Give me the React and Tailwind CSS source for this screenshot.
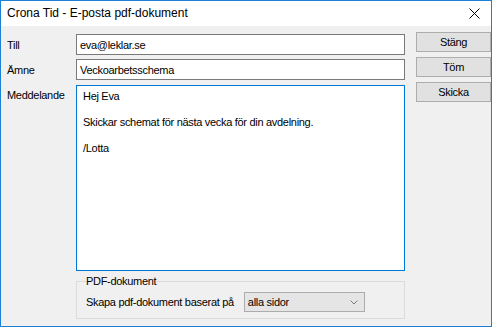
import React from 'react';

const font = { fontFamily: '"Liberation Sans", Arial, sans-serif' };

function Field({ label, value }) {
  return (
    <div className="flex items-center h-[21px]">
      <span className="w-[69px] text-[11px] leading-[14px]">{label}</span>
      <div className="w-[329px] h-[21px] border border-[#7a7a7a] bg-white flex items-center pl-[3px] text-[11px] leading-[14px]">
        {value}
      </div>
    </div>
  );
}

export default function App() {
  return (
    <div
      className="w-[492px] h-[327px] border border-[#1b80d6] bg-[#f0f0f0] flex flex-col text-black overflow-hidden"
      style={font}
    >
      {/* Title bar */}
      <div className="h-[25px] bg-white flex items-center justify-between pl-[6px] pr-[8px] shrink-0">
        <span className="text-[12px] leading-[15px]">Crona Tid - E-posta pdf-dokument</span>
        <svg width="11" height="11" viewBox="0 0 11 11" className="mr-[3px]">
          <path d="M0.5 0.5 L10.5 10.5 M10.5 0.5 L0.5 10.5" stroke="#000" strokeWidth="1" fill="none" />
        </svg>
      </div>

      {/* Body */}
      <div className="flex flex-1 pl-[6px] tracking-[-0.3px]">
        <div className="flex flex-col pt-[8px] w-[404px]">
          <Field label="Till" value="eva@leklar.se" />
          <div className="mt-[4px]">
            <Field label="Ämne" value="Veckoarbetsschema" />
          </div>
          <div className="flex mt-[5px]">
            <span className="w-[69px] text-[11px] leading-[13px] pt-[4px]">Meddelande</span>
            <div className="w-[329px] h-[186px] border border-[#0078d7] bg-white pl-[6px] pt-[4px] text-[11px] leading-[13px]">
              <p>Hej Eva</p>
              <p className="mt-[13px]">Skickar schemat för nästa vecka för din avdelning.</p>
              <p className="mt-[13px]">/Lotta</p>
            </div>
          </div>
          <fieldset className="ml-[69px] w-[329px] mt-[3px] border border-[#dcdcdc] px-[9px] pb-[6px]">
            <legend className="text-[11px] leading-[15px]">PDF-dokument</legend>
            <div className="flex items-center gap-[10px] mt-[3px]">
              <span className="text-[11px] leading-[14px] whitespace-nowrap">Skapa pdf-dokument baserat på</span>
              <div className="w-[121px] h-[20px] border border-[#acacac] bg-[#e5e5e5] flex items-center justify-between pl-[3px] pr-[6px] text-[11px] leading-[14px]">
                <span>alla sidor</span>
                <svg width="8" height="5" viewBox="0 0 8 5">
                  <path d="M0.5 0.5 L4 4 L7.5 0.5" stroke="#7a7a7a" strokeWidth="1" fill="none" />
                </svg>
              </div>
            </div>
          </fieldset>
        </div>

        <div className="flex flex-col gap-[5px] pt-[6px] ml-[7px]">
          {['Stäng', 'Töm', 'Skicka'].map((t) => (
            <div
              key={t}
              className="w-[75px] h-[20px] border border-[#adadad] bg-[#e1e1e1] flex items-center justify-center text-[11px] leading-[14px]"
            >
              {t}
            </div>
          ))}
        </div>
      </div>
    </div>
  );
}
